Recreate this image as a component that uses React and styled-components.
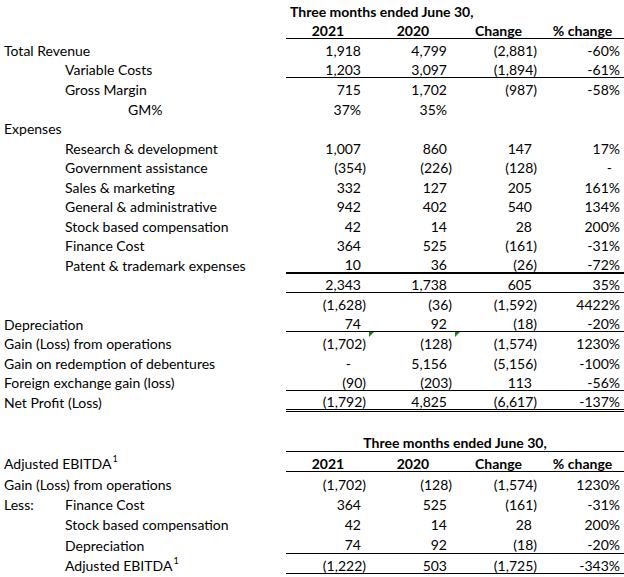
import React from 'react';
import styled, { createGlobalStyle, css } from 'styled-components';

const GlobalStyle = createGlobalStyle`
  body {
    margin: 0;
    background: #fff;
    color: #000;
    font-family: Lato, "Liberation Sans", sans-serif;
  }
`;

const COLS = '286px 84px 86px 85px 83px';

const rules = {
  thin: css`border-bottom: 1px solid #000;`,
  thick: css`border-bottom: 2px solid #000;`,
  double: css`border-bottom: 3px double #000;`
};

const Sheet = styled.div`
  width: 624px;
  display: flex;
  flex-direction: column;
  font-size: 14px;
  line-height: 1;
`;

const Row = styled.div`
  display: grid;
  grid-template-columns: ${COLS};
  height: ${props => props.$h || 19.55}px;

  & > * {
    padding-top: 4px;
  }
`;

const Spacer = styled.div`
  height: ${props => props.$h}px;
`;

const Label = styled.div`
  grid-column: 1;
  box-sizing: border-box;
  display: flex;
  align-items: center;
  padding-left: ${props => [4, 65, 128][props.$indent || 0]}px;
  white-space: nowrap;
`;

const LessTag = styled.span`
  width: 61px;
  margin-left: -61px;
`;

const Sup = styled.span`
  position: relative;
  top: -6px;
  font-size: 9px;
  margin-left: 1px;
`;

const Cell = styled.div`
  position: relative;
  box-sizing: border-box;
  display: flex;
  align-items: center;
  justify-content: flex-end;
  padding-right: ${props => props.$pad}px;
  white-space: nowrap;
  ${props => props.$rule && rules[props.$rule]}
`;

const HeadCell = styled(Cell)`
  justify-content: center;
  padding-right: 0;
  font-weight: 700;
`;

const Title = styled.div`
  grid-column: 2 / span 4;
  box-sizing: border-box;
  display: flex;
  align-items: center;
  justify-content: ${props => (props.$center ? 'center' : 'flex-start')};
  padding-left: ${props => (props.$center ? 0 : 4)}px;
  font-weight: 700;
  white-space: nowrap;
  ${props => props.$rule && rules[props.$rule]}
`;

const Marker = styled.span`
  position: absolute;
  left: -1px;
  top: 0;
  width: 0;
  height: 0;
  border-top: 5px solid #1e7b1e;
  border-right: 5px solid transparent;
`;

// padding so that plain numbers line up with the digits inside ( )
function padFor (value, col) {
  if (col === 3) return value === '-' ? 12 : 4;
  if (value === '-') return 19;
  return value.startsWith('(') ? 4 : 9;
}

function NumRow ({ label, indent, values, rule, marks = [], less, h }) {
  return (
    <Row $h={h}>
      <Label $indent={indent}>
        {less && <LessTag>Less:</LessTag>}
        {label}
      </Label>
      {[0, 1, 2, 3].map(i => (
        <Cell key={i} $pad={padFor(values[i] || '', i)} $rule={rule}>
          {marks.includes(i) && <Marker />}
          {values[i]}
        </Cell>
      ))}
    </Row>
  );
}

function HeadRow ({ label, rule, h }) {
  return (
    <Row $h={h}>
      <Label>{label}</Label>
      {['2021', '2020', 'Change', '% change'].map(x => (
        <HeadCell key={x} $rule={rule}>{x}</HeadCell>
      ))}
    </Row>
  );
}

const Ebitda = () => <>Adjusted EBITDA<Sup>1</Sup></>;

const operations = [
  { label: 'Total Revenue', values: ['1,918', '4,799', '(2,881)', '-60%'] },
  { label: 'Variable Costs', indent: 1, values: ['1,203', '3,097', '(1,894)', '-61%'], rule: 'thin' },
  { label: 'Gross Margin', indent: 1, values: ['715', '1,702', '(987)', '-58%'] },
  { label: 'GM%', indent: 2, values: ['37%', '35%', '', ''] },
  { label: 'Expenses', values: [] },
  { label: 'Research & development', indent: 1, values: ['1,007', '860', '147', '17%'] },
  { label: 'Government assistance', indent: 1, values: ['(354)', '(226)', '(128)', '-'] },
  { label: 'Sales & marketing', indent: 1, values: ['332', '127', '205', '161%'] },
  { label: 'General & administrative', indent: 1, values: ['942', '402', '540', '134%'] },
  { label: 'Stock based compensation', indent: 1, values: ['42', '14', '28', '200%'] },
  { label: 'Finance Cost', indent: 1, values: ['364', '525', '(161)', '-31%'] },
  { label: 'Patent & trademark expenses', indent: 1, values: ['10', '36', '(26)', '-72%'], rule: 'thick' },
  { label: '', values: ['2,343', '1,738', '605', '35%'], rule: 'thin' },
  { label: '', values: ['(1,628)', '(36)', '(1,592)', '4422%'] },
  { label: 'Depreciation', values: ['74', '92', '(18)', '-20%'], rule: 'thin' },
  { label: 'Gain (Loss) from operations', values: ['(1,702)', '(128)', '(1,574)', '1230%'], marks: [1, 2] },
  { label: 'Gain on redemption of debentures', values: ['-', '5,156', '(5,156)', '-100%'] },
  { label: 'Foreign exchange gain (loss)', values: ['(90)', '(203)', '113', '-56%'], rule: 'thin' },
  { label: 'Net Profit (Loss)', values: ['(1,792)', '4,825', '(6,617)', '-137%'], rule: 'double' }
];

const adjusted = [
  { label: 'Gain (Loss) from operations', values: ['(1,702)', '(128)', '(1,574)', '1230%'] },
  { label: 'Finance Cost', indent: 1, less: true, values: ['364', '525', '(161)', '-31%'] },
  { label: 'Stock based compensation', indent: 1, values: ['42', '14', '28', '200%'] },
  { label: 'Depreciation', indent: 1, values: ['74', '92', '(18)', '-20%'], rule: 'thin' },
  { label: <Ebitda />, indent: 1, values: ['(1,222)', '503', '(1,725)', '-343%'], rule: 'thin' }
];

export default function App () {
  return (
    <>
      <GlobalStyle />
      <Sheet>
        <Row>
          <Label />
          <Title>Three months ended June 30,</Title>
        </Row>
        <HeadRow label='' rule='thin' />
        {operations.map((r, i) => <NumRow key={i} {...r} />)}

        <Spacer $h={21.5} />

        <Row $h={20}>
          <Label />
          <Title $center $rule='thin'>Three months ended June 30,</Title>
        </Row>
        <HeadRow label={<Ebitda />} rule='thin' h={20.4} />
        {adjusted.map((r, i) => <NumRow key={i} {...r} h={20.4} />)}
      </Sheet>
    </>
  );
}
